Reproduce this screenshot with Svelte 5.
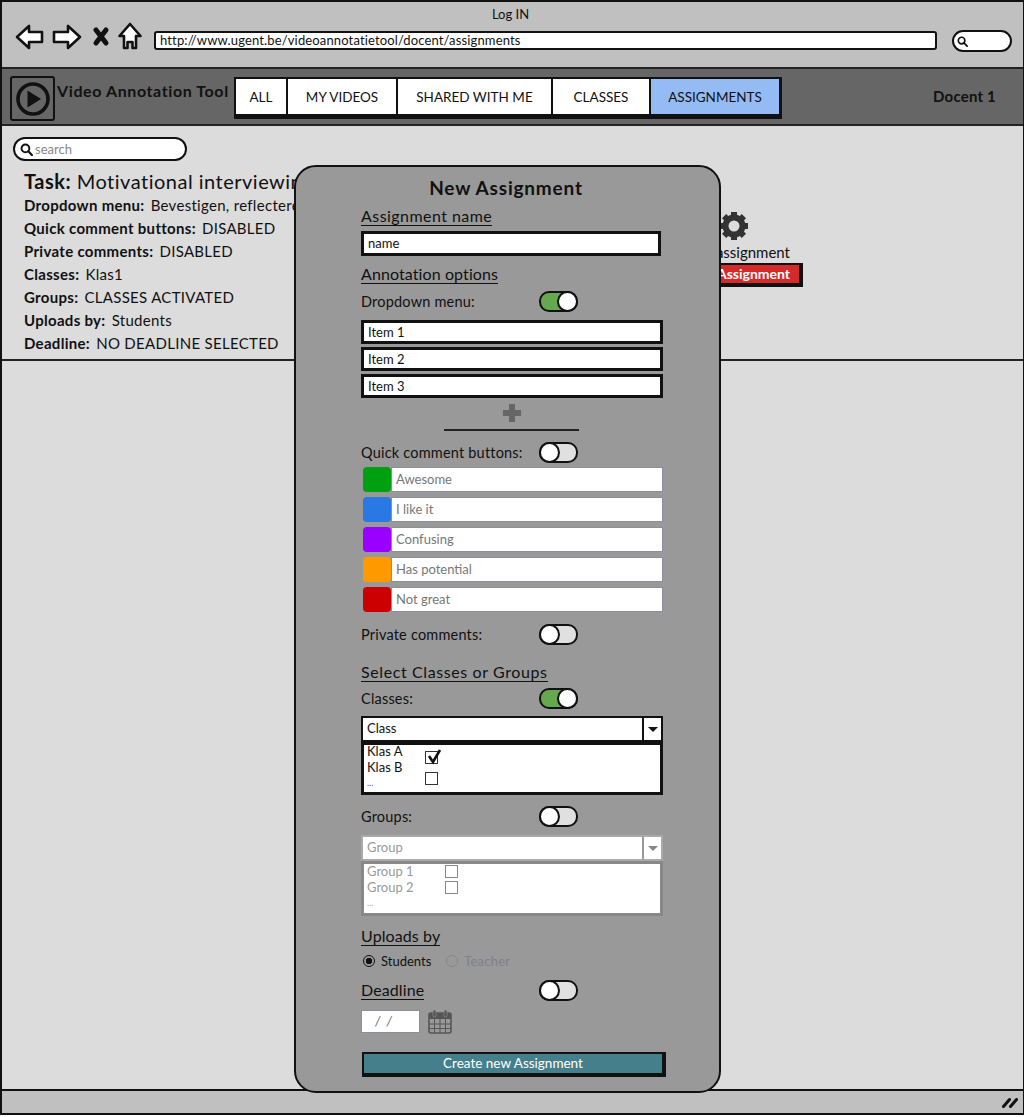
<script>
	const tabs = [
		{ label: 'ALL', width: 50 },
		{ label: 'MY VIDEOS', width: 108 },
		{ label: 'SHARED WITH ME', width: 153 },
		{ label: 'CLASSES', width: 96 },
		{ label: 'ASSIGNMENTS', width: 128, active: true }
	];

	const details = [
		{ key: 'Dropdown menu:', value: 'Bevestigen, reflecteren' },
		{ key: 'Quick comment buttons:', value: 'DISABLED' },
		{ key: 'Private comments:', value: 'DISABLED' },
		{ key: 'Classes:', value: 'Klas1' },
		{ key: 'Groups:', value: 'CLASSES ACTIVATED' },
		{ key: 'Uploads by:', value: 'Students' },
		{ key: 'Deadline:', value: 'NO DEADLINE SELECTED' }
	];

	const quickComments = [
		{ color: '#00a010', text: 'Awesome' },
		{ color: '#2a78e4', text: 'I like it' },
		{ color: '#9900ff', text: 'Confusing' },
		{ color: '#ff9900', text: 'Has potential' },
		{ color: '#cc0000', text: 'Not great' }
	];

	const gearTeeth = [0, 45, 90, 135, 180, 225, 270, 315];
</script>

{#snippet toggle(on)}
	<span class="toggle" class:on><span class="knob"></span></span>
{/snippet}

{#snippet searchIcon(size)}
	<svg width={size} height={size} viewBox="0 0 12 12">
		<circle cx="5" cy="5" r="3.6" fill="none" stroke="#111" stroke-width="1.8" />
		<path d="M7.6 7.6 L11 11" stroke="#111" stroke-width="2" stroke-linecap="round" />
	</svg>
{/snippet}

{#snippet caret(color)}
	<svg width="12" height="7" viewBox="0 0 12 7"><path d="M1 1 H11 L6 6 Z" fill={color} /></svg>
{/snippet}

<div class="window">
	<header class="browser">
		<div class="login">Log IN</div>
		<div class="browser-row">
			<svg class="nav-icons" width="128" height="32" viewBox="0 0 128 32">
				<g fill="#fff" stroke="#111" stroke-width="2.6" stroke-linejoin="round">
					<path d="M2 15 L14 4 V10 H27 V20 H14 V26 Z" />
					<path d="M65 15 L53 4 V10 H39 V20 H53 V26 Z" />
					<path d="M115 2 L125.500 14 H121 V26 H117.500 V20 H112.500 V26 H109 V14 H104.500 Z" />
				</g>
				<path d="M81 8 L91 21 M91 8 L81 21" stroke="#111" stroke-width="5" stroke-linecap="round" />
			</svg>
			<div class="url">http://www.ugent.be/videoannotatietool/docent/assignments</div>
			<div class="browser-search">{@render searchIcon(11)}</div>
		</div>
	</header>

	<nav class="navbar">
		<div class="logo">
			<svg width="36" height="36" viewBox="0 0 36 36">
				<circle cx="18" cy="18" r="15" fill="none" stroke="#111" stroke-width="3.6" />
				<path d="M12.5 9.5 L26 18 L12.5 26.5 Z" fill="#111" />
			</svg>
		</div>
		<div class="brand">Video Annotation Tool</div>
		<div class="tabs">
			{#each tabs as tab}
				<div class="tab" class:active={tab.active} style="width: {tab.width}px">{tab.label}</div>
			{/each}
		</div>
		<div class="user">Docent 1</div>
	</nav>

	<main class="content">
		<section class="task">
			<div class="task-main">
				<div class="search">
					{@render searchIcon(13)}
					<span>search</span>
				</div>
				<h1><b>Task:</b> Motivational interviewing</h1>
				{#each details as row}
					<p><b>{row.key}</b> <span>{row.value}</span></p>
				{/each}
			</div>
			<div class="task-actions">
				<svg class="gear" width="30" height="30" viewBox="0 0 30 30">
					{#each gearTeeth as angle}
						<rect x="12" y="1" width="6" height="8" fill="#333" transform="rotate({angle} 15 15)" />
					{/each}
					<circle cx="15" cy="15" r="8.5" fill="none" stroke="#333" stroke-width="6" />
				</svg>
				<div class="edit-label">Edit assignment</div>
				<div class="delete-btn">Delete Assignment</div>
			</div>
		</section>
	</main>

	<footer class="statusbar">
		<svg width="16" height="12" viewBox="0 0 16 12">
			<path d="M1.5 10.5 L7.5 3.5 M8.5 10.5 L14.5 3.5" stroke="#111" stroke-width="3" stroke-linecap="round" />
		</svg>
	</footer>

	<div class="modal">
		<h2>New Assignment</h2>

		<div class="heading first">Assignment name</div>
		<div class="field name-field">name</div>

		<div class="heading annotation">Annotation options</div>
		<div class="option dropdown-option"><span>Dropdown menu:</span>{@render toggle(true)}</div>

		<div class="items">
			<div class="field item">Item 1</div>
			<div class="field item">Item 2</div>
			<div class="field item">Item 3</div>
		</div>
		<div class="add">
			<svg width="20" height="20" viewBox="0 0 20 20"><path d="M10 1 V19 M1 10 H19" stroke="#666" stroke-width="6" /></svg>
		</div>
		<div class="divider"></div>

		<div class="option quick-option"><span>Quick comment buttons:</span>{@render toggle(false)}</div>
		<div class="quick-list">
			{#each quickComments as item}
				<div class="quick-row">
					<span class="swatch" style="background: {item.color}"></span>
					<span class="quick-text">{item.text}</span>
				</div>
			{/each}
		</div>

		<div class="option private-option"><span>Private comments:</span>{@render toggle(false)}</div>

		<div class="heading select-heading">Select Classes or Groups</div>
		<div class="option classes-option"><span>Classes:</span>{@render toggle(true)}</div>

		<div class="select">
			<span>Class</span>
			<span class="select-arrow">{@render caret('#111')}</span>
		</div>
		<div class="list">
			<div class="list-names">
				<div>Klas A</div>
				<div>Klas B</div>
				<div class="dots">...</div>
			</div>
			<div class="checks">
				<span class="check">
					<svg width="16" height="16" viewBox="0 0 16 16"><path d="M3 7 L7 13 L14 1" fill="none" stroke="#111" stroke-width="2.6" /></svg>
				</span>
				<span class="check"></span>
			</div>
		</div>

		<div class="option groups-option"><span>Groups:</span>{@render toggle(false)}</div>

		<div class="select disabled">
			<span>Group</span>
			<span class="select-arrow">{@render caret('#888')}</span>
		</div>
		<div class="list disabled">
			<div class="list-names">
				<div>Group 1</div>
				<div>Group 2</div>
				<div class="dots">...</div>
			</div>
			<div class="checks">
				<span class="check"></span>
				<span class="check"></span>
			</div>
		</div>

		<div class="heading uploads-heading">Uploads by</div>
		<div class="radios">
			<span class="radio selected"></span><span>Students</span>
			<span class="radio off"></span><span class="off-label">Teacher</span>
		</div>

		<div class="option deadline-option">
			<span><span class="heading">Deadline</span></span>{@render toggle(false)}
		</div>
		<div class="date-row">
			<div class="date">/ &nbsp;/</div>
			<svg width="24" height="25" viewBox="0 0 24 25">
				<rect x="1" y="4" width="22" height="20" rx="2" fill="none" stroke="#555" stroke-width="1.6" />
				<rect x="1" y="4" width="22" height="6" fill="#555" />
				<path d="M1 15 H23 M1 19.5 H23 M6.5 10 V24 M12 10 V24 M17.5 10 V24" stroke="#555" stroke-width="1" />
				<rect x="5" y="1" width="3" height="7" rx="1.5" fill="#555" stroke="#999" stroke-width=".6" />
				<rect x="16" y="1" width="3" height="7" rx="1.5" fill="#555" stroke="#999" stroke-width=".6" />
			</svg>
		</div>

		<div class="create-btn">Create new Assignment</div>
	</div>
</div>

<style>
	:global(body) {
		margin: 0;
		background: #fff;
	}

	.window {
		position: relative;
		box-sizing: border-box;
		display: flex;
		flex-direction: column;
		width: 1024px;
		height: 1115px;
		border: 2px solid #111;
		border-right-width: 1px;
		color: #111;
		font-family: 'Lato', sans-serif;
		font-size: 14px;
		overflow: hidden;
	}

	.browser {
		box-sizing: border-box;
		height: 67px;
		flex: none;
		padding-top: 4px;
		background: #c0c0c0;
		border-bottom: 2px solid #222;
	}

	.login {
		text-align: center;
		font-size: 13px;
		line-height: 16px;
		padding-right: 4px;
	}

	.browser-row {
		display: flex;
		align-items: flex-start;
		padding-left: 13px;
	}

	.nav-icons {
		flex: none;
	}

	.url {
		box-sizing: border-box;
		width: 783px;
		height: 19px;
		margin-left: 11px;
		margin-top: 9px;
		padding-left: 4px;
		background: #fff;
		border: 2px solid #111;
		border-radius: 3px;
		font-size: 13px;
		line-height: 15px;
		letter-spacing: 0.14px;
	}

	.browser-search {
		box-sizing: border-box;
		display: flex;
		align-items: center;
		width: 60px;
		height: 22px;
		margin-left: 15px;
		margin-top: 8px;
		padding-left: 3px;
		background: #fff;
		border: 2px solid #111;
		border-radius: 11px;
	}

	.navbar {
		box-sizing: border-box;
		display: flex;
		height: 57px;
		flex: none;
		padding: 7px 0 0 8px;
		background: #666;
		border-bottom: 2px solid #222;
	}

	.logo {
		box-sizing: border-box;
		display: flex;
		align-items: center;
		justify-content: center;
		width: 45px;
		height: 45px;
		border: 2px solid #111;
		border-radius: 3px;
	}

	.brand {
		width: 177px;
		flex: none;
		margin: 5px 0 0 2px;
		font-size: 16px;
		font-weight: 700;
		letter-spacing: 0.6px;
		white-space: nowrap;
	}

	.tabs {
		box-sizing: border-box;
		display: flex;
		height: 42px;
		margin-top: 1px;
		border: 2px solid #111;
		border-bottom-width: 5px;
		border-right-width: 3px;
		background: #111;
		gap: 2px;
	}

	.tab {
		box-sizing: border-box;
		display: flex;
		align-items: center;
		justify-content: center;
		background: #fff;
		font-size: 13.5px;
	}

	.tab.active {
		background: #94bbf3;
	}

	.user {
		margin-left: auto;
		margin-right: 27px;
		margin-top: 11px;
		font-size: 15px;
		font-weight: 700;
		letter-spacing: 0.2px;
	}

	.content {
		flex: 1;
		background: #dcdcdc;
	}

	.task {
		box-sizing: border-box;
		display: flex;
		height: 235px;
		border-bottom: 2px solid #222;
	}

	.task-main {
		width: 659px;
		padding: 11px 0 0 11px;
		white-space: nowrap;
	}

	.search {
		box-sizing: border-box;
		display: flex;
		align-items: center;
		gap: 2px;
		width: 174px;
		height: 24px;
		padding-left: 5px;
		background: #fff;
		border: 2px solid #111;
		border-radius: 12px;
		color: #888;
		font-size: 13px;
	}

	h1 {
		margin: 8px 0 0 11px;
		font-size: 20px;
		font-weight: 400;
		line-height: 24px;
		letter-spacing: 0.5px;
	}

	.task-main p {
		margin: 0 0 0 11px;
		font-size: 15px;
		line-height: 23px;
		letter-spacing: 0.3px;
	}

	.task-main p span {
		margin-left: 2px;
	}

	.task-main p:first-of-type {
		margin-top: 1px;
	}

	.task-actions {
		display: flex;
		flex-direction: column;
		align-items: flex-end;
		width: 131px;
		padding-top: 85px;
	}

	.gear {
		align-self: flex-start;
		margin-left: 47px;
	}

	.edit-label {
		margin: 2px 13px 0 0;
		font-size: 15px;
		line-height: 18px;
		white-space: nowrap;
	}

	.delete-btn {
		box-sizing: border-box;
		flex: none;
		width: 140px;
		height: 24px;
		margin-top: 2px;
		padding-right: 9px;
		background: #d42a2a;
		border: 2px solid #111;
		border-right-width: 4px;
		border-bottom-width: 4px;
		color: #fff;
		font-size: 14px;
		font-weight: 700;
		line-height: 18px;
		text-align: right;
		white-space: nowrap;
	}

	.statusbar {
		box-sizing: border-box;
		display: flex;
		align-items: center;
		justify-content: flex-end;
		height: 24px;
		flex: none;
		padding-right: 5px;
		background: #c0c0c0;
		border-top: 2px solid #111;
	}

	.modal {
		position: absolute;
		left: 292px;
		top: 163px;
		box-sizing: border-box;
		width: 427px;
		height: 928px;
		padding: 0 56px 0 65px;
		background: #999;
		border: 2px solid #111;
		border-radius: 22px;
	}

	h2 {
		margin: 9px 0 0;
		padding-right: 12px;
		font-size: 19px;
		font-weight: 700;
		line-height: 24px;
		text-align: center;
		letter-spacing: 0.8px;
	}

	.heading {
		display: block;
		width: fit-content;
		font-size: 16px;
		line-height: 18px;
		letter-spacing: 0.1px;
		border-bottom: 1px solid #111;
	}

	.heading.first {
		margin-top: 7px;
		letter-spacing: 0.45px;
	}

	.field {
		box-sizing: border-box;
		width: 302px;
		background: #fff;
		border: 3px solid #111;
		padding-left: 4px;
		font-size: 13px;
	}

	.name-field {
		width: 300px;
		height: 25px;
		margin-top: 5px;
		line-height: 19px;
	}

	.annotation {
		margin-top: 9px;
	}

	.option {
		display: flex;
		align-items: center;
		height: 22px;
		font-size: 14.5px;
		letter-spacing: 0.2px;
	}

	.option > :first-child {
		width: 178px;
		flex: none;
		white-space: nowrap;
	}

	.toggle {
		position: relative;
		box-sizing: border-box;
		display: block;
		width: 39px;
		height: 21px;
		background: #e0e0e0;
		border: 2px solid #111;
		border-radius: 10px;
	}

	.toggle.on {
		background: #66a84f;
	}

	.knob {
		position: absolute;
		left: -2px;
		top: -2px;
		box-sizing: border-box;
		width: 21px;
		height: 21px;
		background: #fff;
		border: 2px solid #111;
		border-radius: 50%;
	}

	.toggle.on .knob {
		left: auto;
		right: -2px;
	}

	.dropdown-option {
		margin-top: 6px;
	}

	.items {
		display: flex;
		flex-direction: column;
		gap: 3px;
		margin-top: 8px;
	}

	.item {
		height: 24px;
		line-height: 18px;
	}

	.add {
		display: flex;
		justify-content: center;
		margin-top: 5px;
		height: 20px;
	}

	.divider {
		width: 135px;
		height: 2px;
		margin: 6px 0 0 83px;
		background: #222;
	}

	.quick-option {
		margin-top: 10px;
	}

	.quick-list {
		display: flex;
		flex-direction: column;
		gap: 5px;
		margin-top: 4px;
		padding-left: 2px;
	}

	.quick-row {
		display: flex;
		height: 25px;
	}

	.swatch {
		width: 28px;
		flex: none;
		border-radius: 4px;
	}

	.quick-text {
		flex: 1;
		padding-left: 4px;
		background: #fff;
		border: 1px solid #8e8e99;
		color: #777;
		font-size: 13px;
		line-height: 22px;
	}

	.private-option {
		margin-top: 11px;
	}

	.select-heading {
		margin-top: 18px;
		letter-spacing: 0.6px;
	}

	.classes-option {
		margin-top: 5px;
	}

	.select {
		box-sizing: border-box;
		display: flex;
		justify-content: space-between;
		width: 302px;
		height: 26px;
		margin-top: 7px;
		padding-left: 4px;
		background: #fff;
		border: 2px solid #111;
		font-size: 13px;
		line-height: 21px;
	}

	.select-arrow {
		display: flex;
		align-items: center;
		justify-content: center;
		width: 17px;
		border-left: 2px solid #111;
	}

	.list {
		box-sizing: border-box;
		display: flex;
		width: 302px;
		height: 53px;
		padding-left: 3px;
		background: #fff;
		border: 3px solid #111;
		font-size: 13px;
		line-height: 16px;
	}

	.list-names {
		width: 58px;
		flex: none;
		margin-top: -2px;
	}

	.dots {
		color: #555;
		font-size: 9px;
	}

	.checks {
		display: flex;
		flex-direction: column;
		gap: 8px;
		padding-top: 6px;
	}

	.check {
		box-sizing: border-box;
		display: block;
		width: 13px;
		height: 13px;
		border: 1px solid #333;
		background: #fff;
	}

	.check svg {
		display: block;
		margin: -3px 0 0 0;
	}

	.groups-option {
		margin-top: 10px;
	}

	.select.disabled {
		margin-top: 8px;
		border-color: #aaa;
		color: #999;
	}

	.select.disabled .select-arrow {
		border-left-color: #999;
	}

	.list.disabled {
		height: 55px;
		border-color: #888;
		color: #999;
	}

	.list.disabled .list-names {
		width: 78px;
		margin-top: -1px;
	}

	.list.disabled .checks {
		gap: 3px;
		padding-top: 1px;
	}

	.list.disabled .check {
		border-color: #888;
	}

	.list.disabled .dots {
		color: #aaa;
	}

	.uploads-heading {
		margin-top: 11px;
	}

	.radios {
		display: flex;
		align-items: center;
		height: 18px;
		margin-top: 6px;
		padding-left: 2px;
		font-size: 13px;
	}

	.radio {
		box-sizing: border-box;
		width: 12px;
		height: 12px;
		margin-right: 6px;
		border: 1px solid #111;
		border-radius: 50%;
	}

	.radio.selected {
		border-width: 1.5px;
		background: radial-gradient(circle, #111 0 3px, transparent 3.5px);
	}

	.radio.off {
		margin-left: 15px;
		border-color: #888;
	}

	.off-label {
		color: #808088;
		letter-spacing: 0.2px;
	}

	.deadline-option {
		margin-top: 9px;
	}

	.date-row {
		display: flex;
		align-items: center;
		gap: 8px;
		margin-top: 8px;
	}

	.date {
		box-sizing: border-box;
		width: 59px;
		height: 23px;
		padding-left: 13px;
		background: #fff;
		border: 1px solid #8e8e99;
		color: #666;
		font-size: 13px;
		line-height: 21px;
		font-style: italic;
	}

	.create-btn {
		box-sizing: border-box;
		width: 304px;
		height: 25px;
		margin: 18px 0 0 1px;
		background: #467f8c;
		border: 2px solid #111;
		border-right-width: 4px;
		border-bottom-width: 4px;
		color: #fff;
		font-size: 13.5px;
		line-height: 19px;
		text-align: center;
	}
</style>
